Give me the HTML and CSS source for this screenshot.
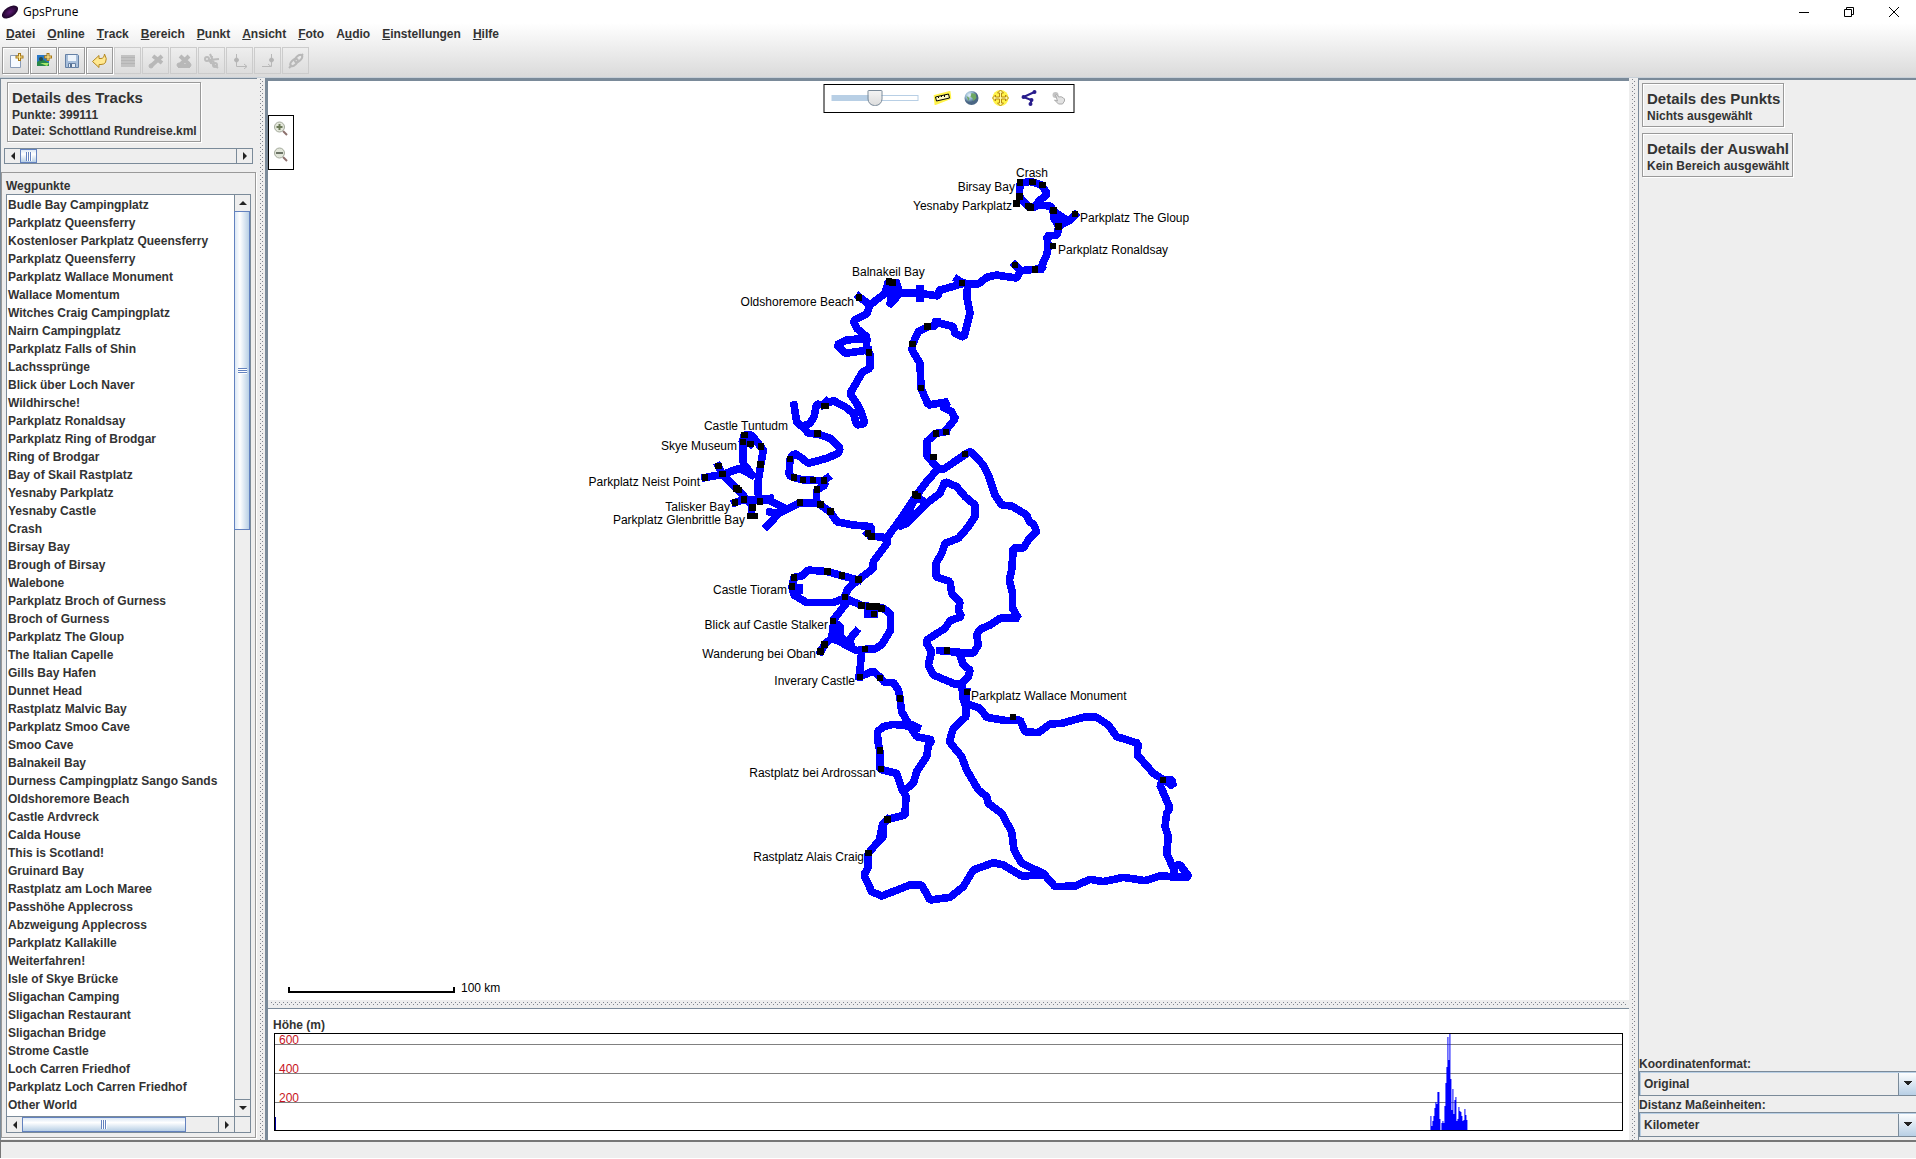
FILE: index.html
```html
<!DOCTYPE html>
<html lang="de">
<head>
<meta charset="utf-8">
<title>GpsPrune</title>
<link rel="stylesheet" href="styles.css">
</head>
<body>
<div class="app">
<header class="titlebar">
  <svg class="logo" width="16" height="16" viewBox="0 0 16 16"><defs><radialGradient id="plum"><stop offset="0" stop-color="#5c1a72"/><stop offset="1" stop-color="#1c0428"/></radialGradient></defs><ellipse cx="8" cy="8" rx="9" ry="5" transform="rotate(-33 8 8)" fill="url(#plum)"/></svg>
  <span class="app-name">GpsPrune</span>
  <div class="window-buttons">
    <button aria-label="Minimieren"><svg width="12" height="12"><path d="M1 6.500h10" stroke="#000"/></svg></button>
    <button aria-label="Wiederherstellen"><svg width="12" height="12" fill="none" stroke="#000"><path d="M1.500 3.500h7v7h-7zM3.500 3.500v-2h7v7h-2"/></svg></button>
    <button aria-label="Schließen"><svg width="12" height="12"><path d="M1 1l10 10M11 1L1 11" stroke="#000"/></svg></button>
  </div>
</header>
<div class="chrome">
<nav class="menubar">
  <button><u>D</u>atei</button><button><u>O</u>nline</button><button><u>T</u>rack</button><button><u>B</u>ereich</button><button><u>P</u>unkt</button><button><u>A</u>nsicht</button><button><u>F</u>oto</button><button>A<u>u</u>dio</button><button><u>E</u>instellungen</button><button><u>H</u>ilfe</button>
</nav>
<div class="toolbar">
  <button aria-label="Datei öffnen"><svg width="16" height="16" viewBox="0 0 16 16"><path d="M2.500 2.500h10v12h-10z" fill="#f6faff" stroke="#8a9cb8"/><path d="M11.500 0v8M7.500 4h8" stroke="#a87818" stroke-width="3"/><path d="M11.500 1v6M8.500 4h6" stroke="#fff0a0"/></svg></button>
  <button aria-label="Foto hinzufügen"><svg width="16" height="16" viewBox="0 0 16 16"><path d="M1 2h12v11H1z" fill="#2878c8"/><path d="M1 9l5-3 7 4v3H1z" fill="#28884a"/><circle cx="5" cy="6" r="2" fill="#264a46"/><path d="M4 10h9l-2 3" fill="#a8e868"/><path d="M12 0v8M8 4h8" stroke="#a87818" stroke-width="3"/><path d="M12 1v6M9 4h6" stroke="#fff0a0"/></svg></button>
  <button aria-label="Speichern"><svg width="16" height="16" viewBox="0 0 16 16"><path d="M1.500 1.500h12l1 1v12h-13z" fill="#a8bfdb" stroke="#6480a4"/><path d="M4 2h8v6H4z" fill="#edf4fb"/><path d="M4.500 10.500h7v4h-7z" fill="#e6edf5" stroke="#6480a4"/><path d="M6 11h2v3H6z" fill="#556f92"/></svg></button>
  <button aria-label="Rückgängig"><svg width="16" height="16" viewBox="0 0 16 16"><path d="M.500 8.500L7 2.500v3h2q3 0 3.500-4.500 3 5 1 8.500-1.500 2-4.500 2H7v3z" fill="#ffe890" stroke="#b48720"/></svg></button>
  <button disabled aria-label="Punkt bearbeiten"><svg width="16" height="16" viewBox="0 0 16 16"><path d="M1 2h14v12H1z" fill="#c2c2c2"/><path d="M1 4.500h14M1 7.500h14M1 10.500h14" stroke="#b5b5b5"/></svg></button>
  <button disabled aria-label="Punkt löschen"><svg width="16" height="16" viewBox="0 0 16 16" fill="#b8b8b8" stroke="#b8b8b8"><path d="M5 3l9 7M14 3L3 13" stroke-width="4"/><circle cx="3" cy="13" r="2"/></svg></button>
  <button disabled aria-label="Bereich löschen"><svg width="16" height="16" viewBox="0 0 16 16" fill="#b8b8b8" stroke="#b8b8b8"><path d="M4 3l9 8M13 3L4 12M2 13h12" stroke-width="4"/><circle cx="3" cy="12" r="2"/><circle cx="13" cy="12" r="2"/></svg></button>
  <button disabled aria-label="Bereich ausschneiden"><svg width="16" height="16" viewBox="0 0 16 16" fill="none" stroke="#bcbcbc" stroke-width="2"><circle cx="3" cy="6" r="2"/><circle cx="11" cy="12" r="2"/><path d="M5 7l10-1M10 10L6 1M5 8l9 7M8 3l-1 8"/></svg></button>
  <button disabled aria-label="Bereichsanfang setzen"><svg width="16" height="16" viewBox="0 0 16 16" fill="none" stroke="#b8b8b8"><path d="M4.500 1v12.500h10M12 11l3 2.500-3 2.500"/><circle cx="4.500" cy="7" r="2" fill="#b4b4b4"/></svg></button>
  <button disabled aria-label="Bereichsende setzen"><svg width="16" height="16" viewBox="0 0 16 16" fill="none" stroke="#b8b8b8"><path d="M11.500 1v12.500H2M8 11l3 2.500"/><circle cx="11.500" cy="7" r="2" fill="#b4b4b4"/></svg></button>
  <button disabled aria-label="Foto verbinden"><svg width="16" height="16" viewBox="0 0 16 16" fill="none" stroke="#b8b8b8" stroke-width="2"><ellipse cx="10.500" cy="5.500" rx="4.500" ry="2.500" transform="rotate(-45 10.500 5.500)"/><ellipse cx="6" cy="9.500" rx="4.500" ry="2.500" transform="rotate(-45 6 9.500)"/><path d="M1 15l3-3M13 3l2-2"/></svg></button>
</div>
</div>
<main class="workspace">
<aside class="left">
  <section class="card">
    <h2>Details des Tracks</h2><p>Punkte: 399111</p><p>Datei: Schottland Rundreise.kml</p>
  </section>
  <div class="hbar top-bar"><button aria-label="Zurück"><i class="arrow west"></i></button><div class="track"><div class="thumb thumb-small"><i class="grip"></i></div></div><button aria-label="Weiter"><i class="arrow east"></i></button></div>
  <section class="waypoints">
    <h3>Wegpunkte</h3>
    <div class="list-grid">
      <ul class="list">
        <li>Budle Bay Campingplatz</li><li>Parkplatz Queensferry</li><li>Kostenloser Parkplatz Queensferry</li><li>Parkplatz Queensferry</li><li>Parkplatz Wallace Monument</li><li>Wallace Momentum</li><li>Witches Craig Campingplatz</li><li>Nairn Campingplatz</li><li>Parkplatz Falls of Shin</li><li>Lachssprünge</li><li>Blick über Loch Naver</li><li>Wildhirsche!</li><li>Parkplatz Ronaldsay</li><li>Parkplatz Ring of Brodgar</li><li>Ring of Brodgar</li><li>Bay of Skail Rastplatz</li><li>Yesnaby Parkplatz</li><li>Yesnaby Castle</li><li>Crash</li><li>Birsay Bay</li><li>Brough of Birsay</li><li>Walebone</li><li>Parkplatz Broch of Gurness</li><li>Broch of Gurness</li><li>Parkplatz The Gloup</li><li>The Italian Capelle</li><li>Gills Bay Hafen</li><li>Dunnet Head</li><li>Rastplatz Malvic Bay</li><li>Parkplatz Smoo Cave</li><li>Smoo Cave</li><li>Balnakeil Bay</li><li>Durness Campingplatz Sango Sands</li><li>Oldshoremore Beach</li><li>Castle Ardvreck</li><li>Calda House</li><li>This is Scotland!</li><li>Gruinard Bay</li><li>Rastplatz am Loch Maree</li><li>Passhöhe Applecross</li><li>Abzweigung Applecross</li><li>Parkplatz Kallakille</li><li>Weiterfahren!</li><li>Isle of Skye Brücke</li><li>Sligachan Camping</li><li>Sligachan Restaurant</li><li>Sligachan Bridge</li><li>Strome Castle</li><li>Loch Carren Friedhof</li><li>Parkplatz Loch Carren Friedhof</li><li>Other World</li>
      </ul>
      <div class="vbar"><button aria-label="Nach oben"><i class="arrow north"></i></button><div class="track"><div class="thumb"><i class="grip"></i></div></div><button aria-label="Nach unten"><i class="arrow south"></i></button></div>
      <div class="hbar"><button aria-label="Nach links"><i class="arrow west"></i></button><div class="track"><div class="thumb thumb-wide"><i class="grip"></i></div></div><button aria-label="Nach rechts"><i class="arrow east"></i></button></div>
      <div class="corner"></div>
    </div>
  </section>
</aside>
<div class="divider"></div>
<section class="center">
<div class="map">
<svg class="canvas" role="img" aria-label="Karte">
<g transform="translate(-268 -81)">
<g class="route">
<g transform="translate(820 150) scale(.33333)">
<path d="M600 100L630 94 665 105 682 132 655 155 645 172 625 170 605 150 598 135zM655 165L692 168 702 185 716 228M702 185L745 214 765 194M702 185L745 214 716 228 702 205zM716 228L712 256 680 258 685 288 680 315 665 348 670 358 645 358 602 362 585 345M602 362L590 384 560 380 530 375 500 382 475 402 430 400 412 388M430 400L380 415 358 420 355 438 300 430 240 430 212 460 215 430 228 400 205 395 195 430 150 465 117 440M300 418V445M240 430L230 400M228 440L212 460M150 465L140 492 100 512 110 535 140 560 140 600 150 612V655L128 665 105 705 90 730 110 760 125 790 135 820 110 825 100 790 75 770 40 752 10 765M140 565L80 570 50 585 75 610 145 600M443 405L440 440 450 490 440 530 432 562 405 550 400 530 352 518 350 505 345 528 323 530 295 545 278 582 276 600 300 640 303 715 325 765 385 755 365 770 395 785 406 806 378 840"/>
</g>
<g transform="translate(570 380) scale(.33333)">
<path d="M770 64L760 75 740 72 732 110 720 130 695 140 680 125 672 75M700 140L715 160 743 162 780 175 810 205 805 220 770 235 715 250 690 230 672 220 660 237 657 285 672 293 700 300 762 302 772 294M762 302L765 315 740 330V370L690 368 650 388 600 362 520 360M650 388L625 400 600 396M625 400L605 425 592 438M745 370L782 397 800 425 850 435 905 440 902 468 893 460M905 468L940 472 955 485 910 545V565L865 600 835 625 822 652M405 293L457 283 510 265 545 285M457 283L503 328 545 375V405M495 368L522 358M600 355L570 358 565 345 565 300 572 255 580 210 572 200 545 165 522 165 518 185 520 250 545 285 535 270M541 192L520 180M445 258L457 283"/>
<path d="M1128 155L1098 160 1070 185 1072 230 1105 265 1120 268 1185 224 1202 214 1240 255 1255 285 1275 345 1295 375 1325 378 1370 405 1378 425 1390 432 1400 455 1375 480 1360 505 1330 505 1325 570 1318 600 1328 640V685L1345 715 1290 715 1260 735 1230 748 1220 765 1225 795 1210 820 1155 816 1110 812M1105 265L1070 305 1040 345 1000 405 957 465M1040 350L985 440 1010 430 1070 370zM1020 395L1000 425M1070 370L1110 340 1125 305 1160 320 1185 350 1215 375 1215 410 1195 440 1165 475 1125 490 1115 520 1098 550V590L1140 605 1145 640 1170 665 1165 690 1175 710 1140 722 1125 745 1070 780 1070 790 1085 815 1075 855 1090 885 1150 910"/>
<path d="M865 600L815 587 773 575 715 570 695 588 672 592 666 620 672 645 710 668 790 668 822 655M688 624v6M825 655L875 676 940 685 962 702 962 750 935 795 912 808 885 808 860 812 790 775M830 668L790 720 800 775M790 735L810 735 810 770 850 800 785 775zM835 790L845 770 858 755M790 772L765 790 752 815M895 702H912M875 815L868 890"/>
</g>
<g transform="translate(680 540) scale(.33333)">
<path d="M540 410L580 393 600 412 615 428 640 427 655 450 660 475 665 515 685 550 712 562M685 558L640 553 610 560 592 575 594 605 600 635V688L650 700 665 745 678 770 675 825 622 838 608 852 600 890M690 560L710 590 757 600 745 615 740 650 710 695 700 730 675 750M840 345L850 375 870 390 865 410 840 435M820 430L845 435 850 480 858 500"/>
</g>
<g transform="translate(720 640) scale(.33333)">
<path d="M740 155L738 230 700 265 688 305 725 350 740 390 775 450 800 470 805 490 845 520 875 575 882 630 905 670 970 700 1005 740 1065 738 1110 718 1150 725 1210 712 1275 722 1320 708 1408 712 1378 672 1360 685 1340 640 1345 590 1335 560 1340 520 1350 505 1335 470 1320 435 1328 420 1355 418 1360 440 1340 425 1300 400 1252 345 1254 310 1190 290 1165 255 1130 232 1090 232 1025 250 990 252 955 278 915 275 900 240 860 242 800 232 780 205 738 190M1362 685V712M970 705L905 708 850 675 820 668 760 690 730 740 690 772 630 780 605 735 570 735 485 768 455 755 432 705 445 680 445 640 470 610 490 590 490 550 502 538"/>
</g>
</g>
<g class="points">
<g transform="translate(820 150) scale(.33333)"><path d="M600 98h0M638 96h0M667 105h0M598 140h0M590 160h0M625 168h0M632 173h0M700 182h0M765 192h0M716 229h0M699 288h0M585 345h0M645 359h0M426 399h0M207 395h0M217 398h0M117 443h0M147 607h0M323 530h0M278 582h0M303 714h0M12 768h0M18 768h0"/></g>
<g transform="translate(570 380) scale(.33333)"><path d="M743 161h0M524 165h0M519 186h0M541 192h0M573 200h0M572 254h0M445 258h0M457 282h0M405 293h0M500 325h0M507 330h0M522 358h0M495 368h0M570 364h0M547 383h0M541 408h12M660 237h0M672 293h0M699 300h0M729 300h0M762 302h0M741 329h0M690 368h0M752 373h0M782 395h0M894 461h0M905 470h0M1098 161h0M1128 156h0M1091 231h0M1185 222h0M1035 343h0M1043 348h0M773 575h0M816 587h0M865 599h0M672 592h0M666 620h0M825 651h0M875 676h0M899 679h22M935 686h0M912 702h0M789 723h0M764 793h0M752 815h0M885 807h0M1131 812h0"/></g>
<g transform="translate(720 640) scale(.33333)"><path d="M420 111h0M480 114h0M540 176h0M741 156h0M879 231h0M480 332h0M483 387h0M502 538h0M446 639h0M1329 420h0"/></g>
</g>
<g class="labels">
<text x="1016" y="177">Crash</text>
<text x="1080" y="222">Parkplatz The Gloup</text>
<text x="1058" y="254">Parkplatz Ronaldsay</text>
<text x="852" y="276">Balnakeil Bay</text>
<text x="971" y="700">Parkplatz Wallace Monument</text>
<text x="461" y="992">100 km</text>
<g text-anchor="end">
<text x="1015" y="191">Birsay Bay</text>
<text x="1012" y="210">Yesnaby Parkplatz</text>
<text x="854" y="306">Oldshoremore Beach</text>
<text x="788" y="430">Castle Tuntudm</text>
<text x="737" y="450">Skye Museum</text>
<text x="700" y="486">Parkplatz Neist Point</text>
<text x="730" y="511">Talisker Bay</text>
<text x="745" y="524">Parkplatz Glenbrittle Bay</text>
<text x="787" y="594">Castle Tioram</text>
<text x="828" y="629">Blick auf Castle Stalker</text>
<text x="816" y="658">Wanderung bei Oban</text>
<text x="855" y="685">Inverary Castle</text>
<text x="876" y="777">Rastplatz bei Ardrossan</text>
<text x="864" y="861">Rastplatz Alais Craig</text>
</g>
</g>
<path d="M289 987v5h165v-5" fill="none" stroke="#000" stroke-width="2"/>
</g>
</svg>
<div class="map-tools">
  <input type="range" aria-label="Transparenz" min="0" max="100" value="50">
  <button aria-label="Maßstab"><svg width="18" height="14" viewBox="0 0 18 14"><path d="M1 5L16 1l1 6-15 6z" fill="#fff34a" stroke="#fff34a" stroke-width="2"/><path d="M2 6l13-3 1 4-13 3z" fill="#fffbc0" stroke="#000"/><path d="M5 7V6M8 6V5M11 6V4" stroke="#000"/></svg></button>
  <button aria-label="Karte"><svg width="16" height="16" viewBox="0 0 16 16"><defs><radialGradient id="globe" cx=".35" cy=".3"><stop offset="0" stop-color="#e4f2fa"/><stop offset=".6" stop-color="#8fb2cc"/><stop offset="1" stop-color="#4a6684"/></radialGradient></defs><circle cx="8" cy="8" r="7" fill="url(#globe)"/><path d="M8 3l4 1 1 4-3 3-1-3-2-1zM3 6l3 2-1 3z" fill="#6da860"/></svg></button>
  <button aria-label="Autom. verschieben"><svg width="18" height="18" viewBox="0 0 18 18"><circle cx="9" cy="9" r="8" fill="#fff34a"/><path d="M9 1l3 3h-2v4h4V6l3 3-3 3v-2h-4v4h2l-3 3-3-3h2v-4H4v2L1 9l3-3v2h4V4H6z" fill="#fff8a0" stroke="#b88a10"/></svg></button>
  <button aria-label="Punkte verbinden"><svg width="16" height="16" viewBox="0 0 16 16" fill="#281c8c" stroke="#281c8c" stroke-width="2"><path d="M13 2L2 7l8 3-1 4" fill="none"/><circle cx="13" cy="2" r="1"/><circle cx="2" cy="7" r="1"/><circle cx="10" cy="10" r="1"/><circle cx="9" cy="14" r="1"/></svg></button>
  <button disabled aria-label="Bearbeitungsmodus"><svg width="16" height="16" viewBox="0 0 16 16"><circle cx="5" cy="5" r="3" fill="#c4c4c4"/><path d="M5 5q1-1 2 0l1 2q3-1 5 1l1 1v2l-2 3H8L4 10l3 1z" fill="#e2e2e2" stroke="#aaa"/></svg></button>
</div>
<div class="zoom-tools">
  <button aria-label="Vergrößern"><svg width="16" height="16" viewBox="0 0 16 16"><path d="M10 10l4 4" stroke="#8d706c" stroke-width="2"/><circle cx="6.500" cy="6" r="5" fill="#e2e6da" stroke="#a4aa9c"/><path d="M6.500 3v6M3.500 6h6" stroke="#6c7a58" stroke-width="2"/></svg></button>
  <button aria-label="Verkleinern"><svg width="16" height="16" viewBox="0 0 16 16"><path d="M10 10l4 4" stroke="#8d706c" stroke-width="2"/><circle cx="6.500" cy="6" r="5" fill="#e2e6da" stroke="#a4aa9c"/><path d="M3 6h7" stroke="#6c7466" stroke-width="2"/></svg></button>
</div>
</div>
<div class="divider-h"></div>
<div class="profile">
  <h3>Höhe (m)</h3>
  <div class="chart"><svg class="chart-svg" role="img" aria-label="Höhenprofil">
    <path d="M0 10.500H4000M0 39.500H4000M0 68.500H4000" stroke="#808080"/>
    <g class="ticks"><text x="4" y="10">600</text><text x="4" y="39">400</text><text x="4" y="68">200</text></g>
    <path d="M0 83h1v13h-1z" fill="#0000a0"/>
    <svg x="86%" overflow="visible"><path fill="#00f" d="M-3 96v-14h1v10h1v-5h1v-5h1v-8h1v-6h1v2h1v-12h2v27h1v11h1v-7h1v-2h1v2h1v-17h1v-23h1v-16h1v-30h1v23h1v-27h1v46h1v31h1v-21h1v25h1v-14h1v-3h1v24h1v-2h1v-12h1v4h1v1h1v4h1v5h1v-1h1v-11h1v6h1v5h1v10z"/></svg>
  </svg></div>
</div>
</section>
<div class="divider right-divider"></div>
<aside class="right">
  <section class="card"><h2>Details des Punkts</h2><p>Nichts ausgewählt</p></section>
  <section class="card"><h2>Details der Auswahl</h2><p>Kein Bereich ausgewählt</p></section>
  <div class="units">
    <label for="coord">Koordinatenformat:</label>
    <select id="coord"><option>Original</option></select>
    <label for="dist">Distanz Maßeinheiten:</label>
    <select id="dist"><option>Kilometer</option></select>
  </div>
</aside>
</main>
<footer class="status"></footer>
</div>
</body>
</html>
```
FILE: styles.css
```css
* { box-sizing: border-box; }
body { margin: 0; background: #fff; color: #333; font: bold 12px/16px "Liberation Sans", Arial, sans-serif; }
h2, h3, p, ul { margin: 0; padding: 0; font-size: 12px; }
button { display: flex; align-items: center; justify-content: center; margin: 0; padding: 0; border: 0; background: none; font: inherit; color: inherit; }
svg { display: block; flex: none; }
.app { display: flex; flex-direction: column; min-height: 100vh; padding-bottom: 1px; }

.titlebar { display: flex; align-items: center; height: 23px; padding-left: 2px; }
.logo { overflow: visible; }
.app-name { margin-left: 5px; color: #000; font: 12px/16px "Open Sans", "Noto Sans", sans-serif; }
.window-buttons { display: flex; margin-left: auto; }
.window-buttons button { width: 45px; height: 20px; }

.chrome { height: 55px; background: linear-gradient(#fff, #dadada); border-bottom: 1px solid #c8d0d8; }
.menubar { display: flex; height: 24px; align-items: flex-start; }
.menubar button { height: 22px; padding: 0 6px; }
.toolbar { display: flex; gap: 1px; padding-left: 2px; }
.toolbar button { width: 27px; height: 27px; border: 1px solid #999; box-shadow: inset 1px 1px #fff, 1px 1px #fff; }
.toolbar button:disabled { border-color: #ccc; box-shadow: none; }

.workspace { display: flex; flex: 1; }
.left { display: flex; flex-direction: column; flex: none; width: 257px; border: 1px solid #7a8a99; border-width: 1px 0 0 1px; background: #eee; }
.card { align-self: flex-start; padding: 5px 3px 2px 4px; border: 1px solid #999; box-shadow: inset 1px 1px #fff, 1px 1px #fff; white-space: nowrap; }
.card h2 { font-size: 15px; line-height: 19px; }
.left .card { margin: 3px 0 0 6px; }
.top-bar { margin: 6px 4px 8px 3px; border: 1px solid #7a8a99; }

.waypoints { display: flex; flex-direction: column; flex: 1; margin: 0 1px 2px 0; padding: 5px 4px 4px; border: 1px solid #999; box-shadow: 1px 1px #fff; }
.list-grid { display: grid; flex: 1; grid-template: 1fr 16px / 1fr 16px; border: 1px solid #7a8a99; background: #eee; }
.waypoints h3 { height: 16px; line-height: 16px; }
.list { list-style: none; background: #fff; padding: 1px 1px 0; }
.list li { height: 18px; line-height: 18px; white-space: nowrap; }
.corner { border: 1px solid #7a8a99; border-width: 1px 0 0 1px; }
.hbar { display: flex; height: 16px; }
.hbar button { width: 15px; }
.hbar .track { flex: 1; border: solid #7a8a99; border-width: 0 1px; }
.list-grid .hbar { border-top: 1px solid #7a8a99; }
.vbar { display: flex; flex-direction: column; border-left: 1px solid #7a8a99; }
.vbar button { height: 16px; }
.vbar .track { flex: 1; border: solid #7a8a99; border-width: 1px 0; }
.thumb { display: flex; align-items: center; justify-content: center; border: 1px solid #6382bf; }
.vbar .thumb { height: 36%; margin: -1px 0 0 -1px; background: linear-gradient(90deg, #dce8f5, #fff 35%, #b8cfe5); }
.hbar .thumb { height: 100%; margin-left: -1px; background: linear-gradient(#dce8f5, #fff 35%, #b8cfe5); }
.thumb-small { width: 17px; }
.thumb-wide { width: 84%; }
.grip { width: 6px; height: 9px; background: repeating-linear-gradient(90deg, #6382bf 0 1px, #fff 1px 2px); }
.vbar .grip { width: 9px; height: 6px; background: repeating-linear-gradient(#6382bf 0 1px, #fff 1px 2px); }
.arrow { border: 4px solid transparent; }
.west { border-left-width: 0; border-right-color: #222; }
.east { border-right-width: 0; border-left-color: #222; }
.north { border-top-width: 0; border-bottom-color: #222; }
.south { border-bottom-width: 0; border-top-color: #222; }

.divider, .divider-h {
  background:
    conic-gradient(from 270deg at 1px 1px, #80858f 90deg, transparent 0) 0 0 / 4px 4px content-box,
    conic-gradient(from 270deg at 1px 1px, #80858f 90deg, transparent 0) 2px 2px / 4px 4px content-box,
    #eee;
}
.divider { flex: none; width: 8px; padding: 1px 2px 0 3px; }
.divider-h { height: 9px; padding: 2px 2px 2px 3px; border-bottom: 1px solid #7a8a99; }
.center { display: flex; flex-direction: column; flex: 1; min-width: 0; border-left: 3px solid #7a8a99; border-top: 3px solid #7a8a99; }
.map { position: relative; flex: 1; background: #fff; overflow: hidden; }
.canvas { position: absolute; inset: 0; width: 100%; height: 100%; }
.route { fill: none; stroke: #00f; stroke-width: 23; stroke-linecap: square; stroke-linejoin: bevel; shape-rendering: crispEdges; }
.points { fill: none; stroke: #000; stroke-width: 20; stroke-linecap: square; shape-rendering: crispEdges; }
.labels { font-weight: normal; fill: #000; }
.map-tools { position: absolute; top: 3px; left: 50%; transform: translateX(-50%); display: flex; align-items: center; gap: 1px; width: 251px; height: 29px; padding: 0 0 2px 7px; border: 1px solid #000; background: #fff; }
.map-tools button { width: 28px; height: 24px; }
.map-tools input { appearance: none; width: 87px; height: 18px; margin: 0 9px 0 0; background: linear-gradient(90deg, #b8cfe5 50%, #fff 50%) center / 85px 4px no-repeat, linear-gradient(#b8cfe5, #b8cfe5) center / 87px 6px no-repeat; }
.map-tools input::-webkit-slider-thumb { appearance: none; width: 15px; height: 16px; background: linear-gradient(#f4f4f4, #ddd); border: 1px solid #7a8a99; border-radius: 1px 1px 7px 7px; }
.zoom-tools { position: absolute; left: 0; top: 34px; width: 26px; height: 55px; display: flex; flex-direction: column; align-items: center; border: 1px solid #000; background: #fff; }
.zoom-tools button { height: 26px; }
.profile { padding: 8px 6px 9px; background: #fff; }
.profile h3 { line-height: 16px; margin-left: -1px; }
.chart { height: 98px; border: 1px solid #000; }
.chart-svg { width: 100%; height: 96px; }
.ticks { fill: #c8141e; font-weight: normal; }

.right { display: flex; flex-direction: column; flex: none; width: 278px; padding-left: 3px; border: 1px solid #7a8a99; border-width: 2px 0 0 1px; background: #eee; }
.right .card { margin: 3px 0; }
.right-divider { width: 9px; }
.units { display: flex; flex-direction: column; margin: auto 0 3px -3px; }
.units label { height: 16px; line-height: 18px; }
select { appearance: none; width: 100%; height: 25px; padding: 0 4px; border: 1px solid #7a8a99; border-right: 0; border-radius: 0; box-shadow: inset 1px 1px #b8cfe5; font: inherit; color: inherit;
  background:
    conic-gradient(from 315deg at 50% 100%, #222 90deg, transparent 0) right 3px center / 10px 5px no-repeat,
    linear-gradient(#7a8a99, #7a8a99) right 17px top / 1px 100% no-repeat,
    linear-gradient(#fff, #b8cfe5) right / 17px 100% no-repeat,
    #eee; }
select { background: 
    conic-gradient(from 315deg at 50% 100%, #222 90deg, transparent 0) right 3px center / 10px 5px no-repeat,
    linear-gradient(#7a8a99, #7a8a99) right 17px top / 1px 100% no-repeat,
    linear-gradient(#fff, #b8cfe5) right / 17px 100% no-repeat,
    #eee; background-image: conic-gradient(from 315deg at 50% 100%, #222 90deg, transparent 0), linear-gradient(#7a8a99, #7a8a99), linear-gradient(#fff, #b8cfe5); }
.status { height: 18px; border: 1px solid #777; border-width: 2px 0 0 1px; background: #eee; }
```
